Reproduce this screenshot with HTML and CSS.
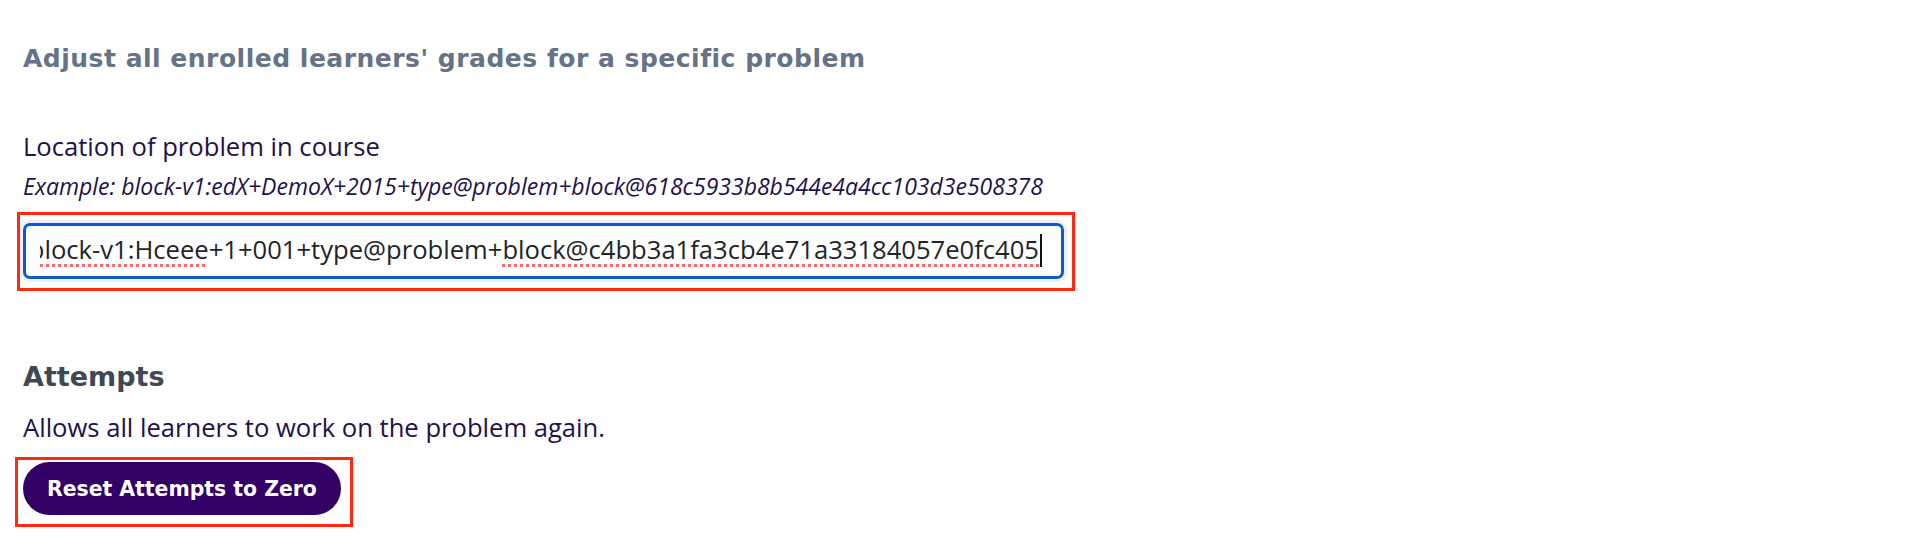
FILE: index.html
```html
<!DOCTYPE html>
<html lang="en">
<head>
<meta charset="utf-8">
<title>Adjust grades</title>
<link rel="stylesheet" href="styles.css">
</head>
<body>
<main class="panel">
  <h2 class="title">Adjust all enrolled learners' grades for a specific problem</h2>
  <label class="field-label" for="loc">Location of problem in course</label>
  <p class="hint">Example: block-v1:edX+DemoX+2015+type@problem+block@618c5933b8b544e4a4cc103d3e508378</p>
  <div class="marked marked-input">
    <div class="input" id="loc">
      <div class="clip"><span class="value"><span class="sp">block-v1:Hceee</span>+1+001+type@problem+<span class="sp">block@c4bb3a1fa3cb4e71a33184057e0fc405</span><span class="caret"></span></span></div>
    </div>
  </div>
  <h3 class="subtitle">Attempts</h3>
  <p class="desc">Allows all learners to work on the problem again.</p>
  <div class="marked marked-btn"><button class="btn" type="button">Reset Attempts to Zero</button></div>
</main>
</body>
</html>
```

FILE: styles.css
```css
* { box-sizing: border-box; }
html, body {
  min-height: 550px;
}
body {
  margin: 0;
  background: #ffffff;
  font-family: "Open Sans", "Liberation Sans", sans-serif;
}
.panel {
  padding: 43px 0 35px 23px;
  width: 1100px;
}
.title {
  margin: 0;
  font-family: "DejaVu Sans", "Liberation Sans", sans-serif;
  font-weight: 700;
  font-size: 25px;
  line-height: 32px;
  letter-spacing: 0.5px;
  color: #657386;
}
.field-label {
  display: block;
  margin-top: 54px;
  font-size: 25.6px;
  line-height: 36px;
  color: #22114a;
}
.hint {
  margin: 5px 0 0;
  font-size: 23px;
  line-height: 32px;
  font-style: italic;
  color: #22114a;
}
.marked {
  position: relative;
}
.marked::after {
  content: "";
  position: absolute;
  border: 3px solid #ff2a12;
  pointer-events: none;
}
.marked-input {
  margin-top: 21px;
  width: 1041px;
}
.marked-input::after {
  top: -11px;
  left: -6px;
  right: -11px;
  bottom: -12px;
}
.input {
  height: 56px;
  border: 3px solid #0a5cc7;
  border-radius: 7px;
  box-shadow: 0 0 0 3px #eceef8;
  padding: 0 19px 0 14px;
  display: flex;
  align-items: center;
}
.clip {
  flex: 1;
  min-width: 0;
  display: flex;
  justify-content: flex-end;
  overflow: hidden;
  white-space: nowrap;
  padding-bottom: 2px;
}
.value {
  font-size: 25.6px;
  line-height: 36px;
  color: #212529;
  display: flex;
  align-items: center;
  flex-shrink: 0;
}
.sp {
  text-decoration: underline dotted #ff6b6b;
  text-decoration-thickness: 3px;
  text-underline-offset: 5px;
}
.caret {
  display: inline-block;
  width: 2px;
  height: 33px;
  background: #111;
  margin-left: 1px;
}
.subtitle {
  margin: 80px 0 0;
  font-family: "DejaVu Sans", "Liberation Sans", sans-serif;
  font-weight: 700;
  font-size: 27px;
  line-height: 36px;
  color: #3f4853;
}
.desc {
  margin: 15px 0 0;
  font-size: 25.6px;
  line-height: 36px;
  color: #22114a;
}
.marked-btn {
  margin-top: 16px;
  width: max-content;
}
.marked-btn::after {
  top: -5px;
  left: -8px;
  right: -12px;
  bottom: -12px;
}
.btn {
  display: block;
  height: 53px;
  padding: 0 24px;
  border: none;
  border-radius: 27px;
  background: #330066;
  color: #ffffff;
  font-family: "DejaVu Sans", "Liberation Sans", sans-serif;
  font-weight: 700;
  font-size: 20.4px;
}
```
